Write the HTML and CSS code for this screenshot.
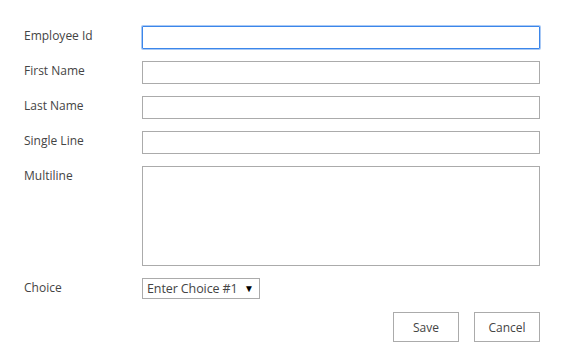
FILE: index.html
```html
<!DOCTYPE html>
<html lang="en">

<head>
    <meta charset="UTF-8">
    <title>New Item</title>
    <link rel="stylesheet" href="styles.css">
</head>

<body>

    <form id="itemForm" class="form">
        <label class="label" for="employeeId">Employee Id</label>
        <input type="text" id="employeeId" class="field field-focus">

        <label class="label" for="firstName">First Name</label>
        <input type="text" id="firstName" class="field">

        <label class="label" for="lastName">Last Name</label>
        <input type="text" id="lastName" class="field">

        <label class="label" for="singleLine">Single Line</label>
        <input type="text" id="singleLine" class="field">

        <label class="label" for="multiline">Multiline</label>
        <textarea id="multiline" class="field area"></textarea>

        <label class="label" for="choice">Choice</label>
        <div class="field-cell">
            <span class="select-wrap">
                <select id="choice" class="select">
                    <option>Enter Choice #1</option>
                    <option>Enter Choice #2</option>
                    <option>Enter Choice #3</option>
                </select>
            </span>
        </div>

        <div class="actions">
            <button type="submit" class="btn">Save</button>
            <button type="button" class="btn">Cancel</button>
        </div>
    </form>

</body>

</html>
```

FILE: styles.css
```css
body {
    margin: 0;
    padding: 26px 0 0 24px;
    background: #fff;
    font-family: "Open Sans", "Noto Sans", sans-serif;
    font-size: 12px;
    color: #444;
}

.form {
    display: grid;
    grid-template-columns: 118px 398px;
    row-gap: 12px;
}

.label {
    padding-top: 1px;
    color: #444;
}

.field {
    box-sizing: border-box;
    width: 398px;
    height: 23px;
    margin: 0;
    padding: 2px 4px;
    border: 1px solid #ababab;
    background: #fff;
    font-family: inherit;
    font-size: 12px;
    color: #444;
    outline: none;
}

.field-focus {
    border-color: #3b86ea;
    box-shadow: 0 0 0 1px #a9c9f5;
    border-radius: 1px;
}

.area {
    height: 100px;
    resize: none;
}

.select-wrap {
    position: relative;
    display: inline-block;
}

.select-wrap::after {
    content: "\25BC";
    position: absolute;
    right: 6px;
    top: 4px;
    font-size: 10px;
    line-height: 12px;
    color: #000;
    pointer-events: none;
}

.select {
    box-sizing: border-box;
    width: 118px;
    height: 21px;
    margin: 0;
    padding: 0 0 0 4px;
    border: 1px solid #ababab;
    border-radius: 0;
    background: #fff;
    -webkit-appearance: none;
    appearance: none;
    font-family: inherit;
    font-size: 12.5px;
    letter-spacing: -0.1px;
    color: #444;
    outline: none;
}

.actions {
    grid-column: 2;
    display: flex;
    justify-content: flex-end;
    gap: 15px;
    margin-top: 1px;
}

.btn {
    box-sizing: border-box;
    width: 66px;
    height: 30px;
    padding: 0;
    border: 1px solid #ababab;
    background: #fff;
    font-family: inherit;
    font-size: 12px;
    color: #444;
    cursor: pointer;
}

.btn:hover {
    background: #f4f4f4;
}
```
